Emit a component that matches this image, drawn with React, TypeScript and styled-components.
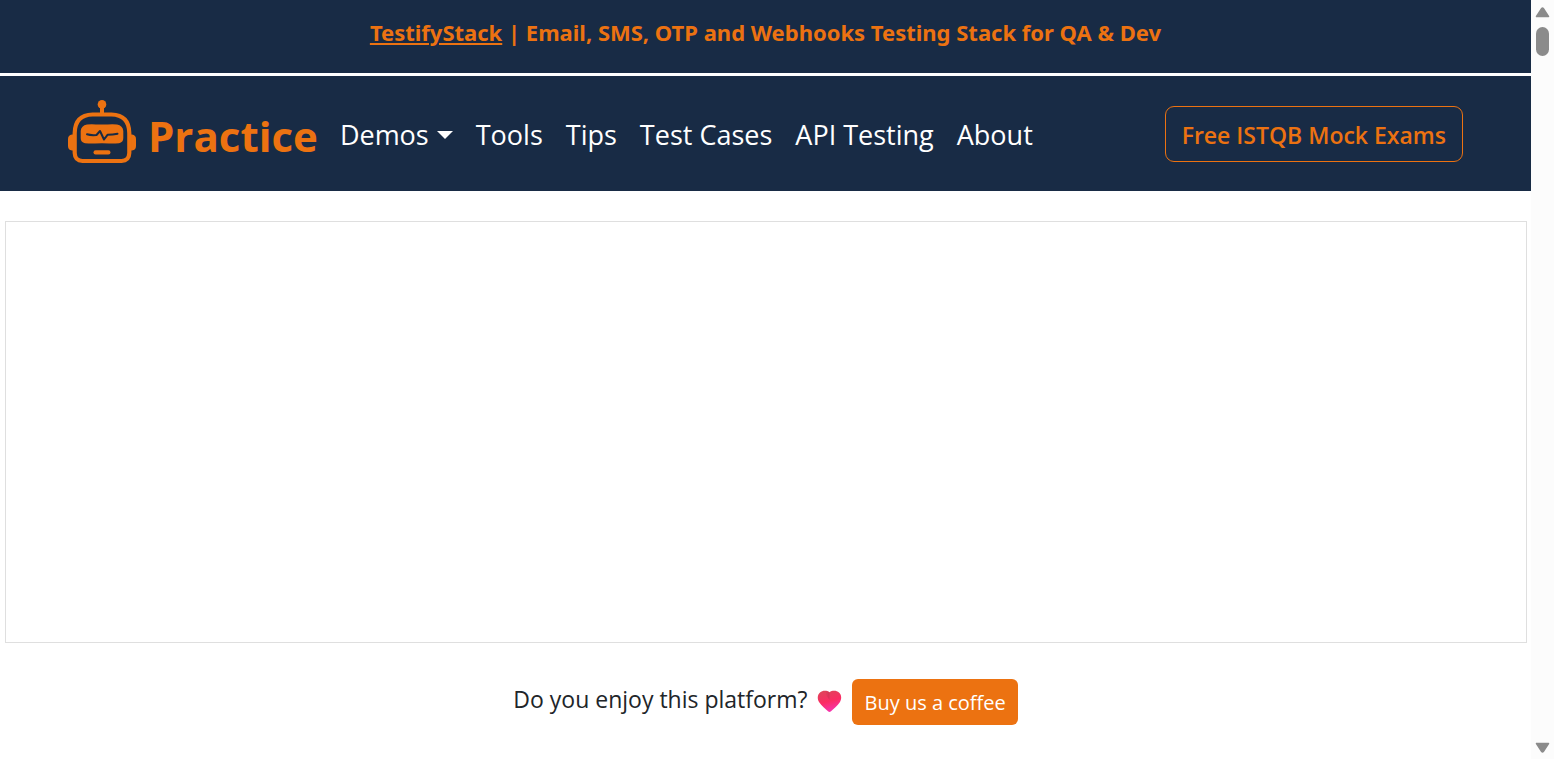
import React from "react";
import styled, { createGlobalStyle } from "styled-components";

const navy = "#182b45";
const orange = "#ec7211";

const GlobalStyle = createGlobalStyle`
  *, *::before, *::after { box-sizing: border-box; }
  body {
    margin: 0;
    background: #fff;
    color: #212529;
    font-family: "Segoe UI", "Open Sans", "Noto Sans", sans-serif;
  }
`;

const Shell = styled.div`
  display: flex;
  height: 100vh;
  overflow: hidden;
`;

const Page = styled.div`
  flex: 1;
  min-width: 0;
`;

const Announcement = styled.div`
  padding: 14px 16px 23px;
  border-bottom: 3px solid #fff;
  background: ${navy};
  background-clip: padding-box;
  color: ${orange};
  font-family: "Segoe UI", "Noto Sans", "Open Sans", sans-serif;
  font-size: 22px;
  font-weight: 700;
  line-height: 36px;
  text-align: center;
`;

const AnnouncementLink = styled.a`
  color: inherit;
  text-decoration: underline;
  text-decoration-thickness: 2px;
  text-underline-offset: 2px;
`;

const NavBar = styled.nav`
  display: flex;
  align-items: center;
  padding: 24px 68px 23px;
  background: ${navy};
`;

const Brand = styled.a`
  display: flex;
  align-items: flex-start;
  gap: 11px;
  margin-right: 22px;
  color: ${orange};
  text-decoration: none;
`;

const BrandName = styled.span`
  padding-top: 4px;
  font-size: 42px;
  font-weight: 700;
  line-height: 64px;
`;

const NavList = styled.ul`
  display: flex;
  flex: 1;
  gap: 23px;
  margin: 0;
  padding: 2px 0 0;
  list-style: none;
`;

const NavLink = styled.a<{ $caret?: boolean }>`
  display: flex;
  align-items: center;
  color: #fff;
  font-size: 27px;
  line-height: 44px;
  text-decoration: none;
  white-space: nowrap;

  &::after {
    content: "";
    display: ${(p) => (p.$caret ? "block" : "none")};
    margin-left: 8px;
    border: 8px solid transparent;
    border-top-color: #fff;
    border-bottom: 0;
  }
`;

const ExamsButton = styled.button`
  height: 56px;
  padding: 2px 16px 0;
  border: 1px solid ${orange};
  border-radius: 9px;
  background: transparent;
  color: ${orange};
  font-family: inherit;
  font-size: 23px;
  font-weight: 600;
  white-space: nowrap;
`;

const AdSlot = styled.div`
  min-height: 422px;
  margin: 30px 4px 36px 5px;
  border: 1px solid #dfdfdf;
`;

const Support = styled.div`
  display: flex;
  align-items: center;
  justify-content: center;
  gap: 10px;
`;

const SupportText = styled.p`
  margin: 0;
  padding-bottom: 6px;
  font-size: 23px;
  line-height: 36px;
`;

const CoffeeButton = styled.button`
  height: 46px;
  padding: 0 12px;
  border: 0;
  border-radius: 6px;
  background: ${orange};
  color: #fff;
  font-family: inherit;
  font-size: 20px;
`;

const ScrollTrack = styled.div`
  display: flex;
  flex-direction: column;
  align-items: center;
  justify-content: space-between;
  width: 23px;
  padding: 6px 0 5px;
  background: #fcfcfc;
`;

const ScrollTop = styled.div`
  display: flex;
  flex-direction: column;
  align-items: center;
  gap: 9px;
`;

const Thumb = styled.div`
  width: 13px;
  height: 29px;
  border-radius: 7px;
  background: #8b8b8b;
`;

const RobotLogo = () => (
  <svg width="69" height="64" viewBox="0 0 69 64" aria-hidden="true">
    <g fill={orange}>
      <circle cx="34" cy="4.4" r="4.3" />
      <rect x="32" y="6" width="4" height="9" />
      <path d="M5 34.500H4Q0 35 0 39v7q0 4 4 4.500H5ZM63 34.500h1Q68 35 68 39v7q0 4-4 4.500h-1Z" />
      <path d="M12.700 31Q13.200 25.500 19 24.500Q23 24 28 24.400Q34 24.700 40 24.400Q45 24 49 24.500Q54.800 25.500 55.300 31V38Q55.300 42.500 51 43.200Q46 43.700 41 43.500Q34 43.100 27 43.500Q22 43.700 17 43.200Q12.700 42.500 12.700 38Z" />
      <rect x="25.500" y="50.300" width="17" height="4.200" rx="2.100" />
    </g>
    <path
      d="M24.500 14.500H43.500Q61 15 61.300 33V53Q61 60.800 53.500 61H14.500Q7 60.800 6.700 53V33Q7 15 24.500 14.500Z"
      fill="none"
      stroke={orange}
      strokeWidth="4.200"
    />
    <path
      d="M19 34.300Q23 35.500 28.500 35L32 31L36 39.500L39.500 34.800Q45 34.800 49.500 33.800"
      fill="none"
      stroke={navy}
      strokeWidth="2"
      strokeLinecap="round"
      strokeLinejoin="round"
    />
  </svg>
);

const Caret = ({ down = false }: { down?: boolean }) => (
  <svg width="15" height="12" viewBox="0 0 15 12" aria-hidden="true">
    <path
      d={down ? "M1.500 1.500H13.500L8.300 9.500Q7.500 10.500 6.700 9.500Z" : "M1.500 10.500H13.500L8.300 2.500Q7.500 1.500 6.700 2.500Z"}
      fill="#8b8b8b"
      stroke="#8b8b8b"
      strokeWidth="1.500"
      strokeLinejoin="round"
    />
  </svg>
);

const HeartIcon = styled.svg`
  margin-bottom: 2px;
`;

const Heart = () => (
  <HeartIcon width="25" height="23" viewBox="0 0 25 23" role="img" aria-label="love">
    <defs>
      <linearGradient id="heartFill" x1="0.300" y1="0" x2="0.600" y2="1">
        <stop offset="0" stopColor="#e0445a" />
        <stop offset="0.500" stopColor="#fb2c63" />
        <stop offset="1" stopColor="#f535b4" />
      </linearGradient>
      <linearGradient id="heartShade" x1="0" y1="0" x2="1" y2="0">
        <stop offset="0" stopColor="#b92f4e" stopOpacity="0" />
        <stop offset="1" stopColor="#b92f4e" stopOpacity="0.500" />
      </linearGradient>
    </defs>
    <path
      d="M12.500 2.200C10 .4 5.500 .2 3 2.500C.3 5 .2 9 2 12C4.500 16 8.500 19 11.300 21.500Q12.500 22.400 13.700 21.500C16.500 19 20.500 16 23 12C24.800 9 24.700 5 22 2.500C19.500 .2 15 .4 12.500 2.200Z"
      fill="url(#heartFill)"
    />
    <path d="M8 1Q11 1.300 12.500 2.200V10Q9 6 8 1Z" fill="url(#heartShade)" />
  </HeartIcon>
);

const links = ["Demos", "Tools", "Tips", "Test Cases", "API Testing", "About"];

export default function App() {
  return (
    <Shell>
      <GlobalStyle />
      <Page>
        <Announcement>
          <AnnouncementLink href="#testifystack">TestifyStack</AnnouncementLink> | Email, SMS, OTP and Webhooks
          Testing Stack for QA &amp; Dev
        </Announcement>
        <NavBar>
          <Brand href="#home">
            <RobotLogo />
            <BrandName>Practice</BrandName>
          </Brand>
          <NavList>
            {links.map((label) => (
              <li key={label}>
                <NavLink href="#nav" $caret={label === "Demos"}>
                  {label}
                </NavLink>
              </li>
            ))}
          </NavList>
          <ExamsButton type="button">Free ISTQB Mock Exams</ExamsButton>
        </NavBar>
        <AdSlot />
        <Support>
          <SupportText>Do you enjoy this platform?</SupportText>
          <Heart />
          <CoffeeButton type="button">Buy us a coffee</CoffeeButton>
        </Support>
      </Page>
      <ScrollTrack aria-hidden="true">
        <ScrollTop>
          <Caret />
          <Thumb />
        </ScrollTop>
        <Caret down />
      </ScrollTrack>
    </Shell>
  );
}
